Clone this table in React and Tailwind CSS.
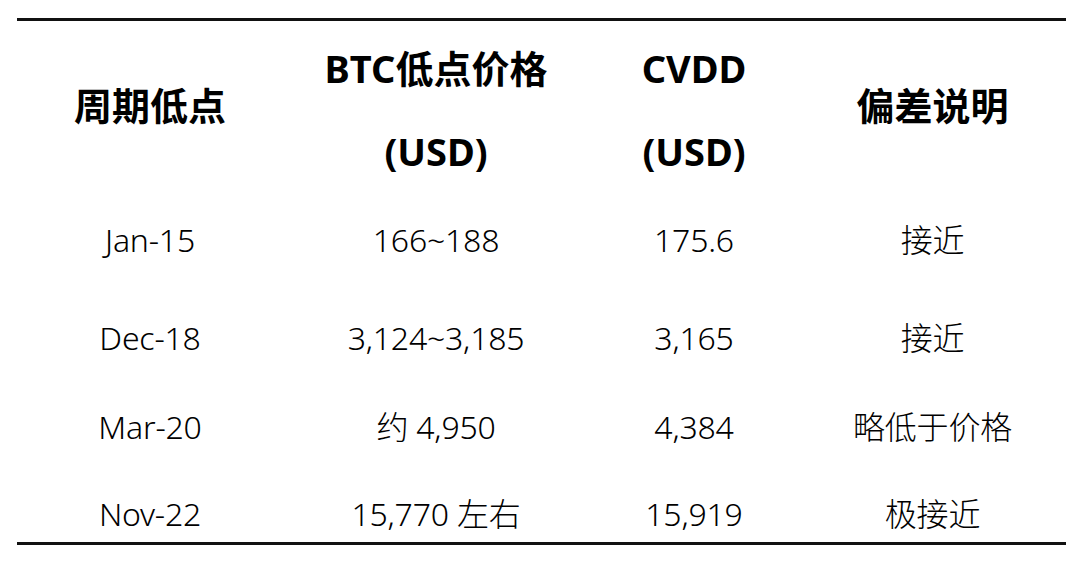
import React from "react";

const font = { fontFamily: '"Noto Sans", "Noto Sans CJK SC", sans-serif' };

const rows = [
  { d: "Jan-15", p: "166~188", c: "175.6", n: "接近", mt: "mt-[21px]" },
  { d: "Dec-18", p: "3,124~3,185", c: "3,165", n: "接近", mt: "mt-[58px]" },
  { d: "Mar-20", p: "约 4,950", c: "4,384", n: "略低于价格", mt: "mt-[49px]" },
  { d: "Nov-22", p: "15,770 左右", c: "15,919", n: "极接近", mt: "mt-[47px]" },
];

export default function App() {
  return (
    <div className="w-[1080px] h-[561px] bg-white pt-[18px] px-[17px]" style={font}>
      <div className="w-[1049px] border-t-[3px] border-b-[3px] border-[#111] pb-[8px]">
        <div className="grid grid-cols-[266px_306px_210px_1fr] h-[178px] items-center text-[38px] font-bold text-black leading-[83px] text-center">
          <div className="-mt-[10px]">周期低点</div>
          <div>
            <div>BTC低点价格</div>
            <div>(USD)</div>
          </div>
          <div>
            <div>CVDD</div>
            <div>(USD)</div>
          </div>
          <div className="-mt-[10px]">偏差说明</div>
        </div>
        {rows.map((r) => (
          <div
            key={r.d}
            className={`grid grid-cols-[266px_306px_210px_1fr] h-[40px] items-center text-[32px] font-light leading-[40px] text-black text-center tracking-[-0.2px] ${r.mt}`}
          >
            <div>{r.d}</div>
            <div>{r.p}</div>
            <div>{r.c}</div>
            <div>{r.n}</div>
          </div>
        ))}
      </div>
    </div>
  );
}
